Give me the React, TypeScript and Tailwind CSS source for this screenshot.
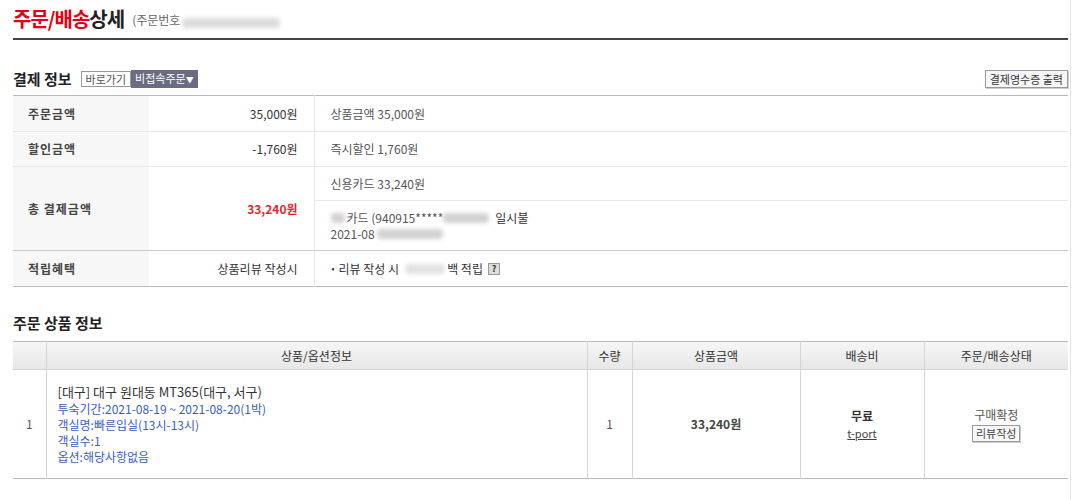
import React from 'react'

const font = { fontFamily: '"Noto Sans CJK KR", "Noto Sans", sans-serif' }

function Blur({ w, className = '' }: { w: number; className?: string }) {
  return (
    <span
      className={`inline-block align-middle h-[10px] rounded-sm bg-[#d2d2d2] blur-[2px] ${className}`}
      style={{ width: w }}
    />
  )
}

function PayRow({
  label,
  value,
  children,
  valueClass = 'text-[#333]',
  top = 'border-t border-[#e8e8e8]',
}: {
  label: string
  value: string
  children: React.ReactNode
  valueClass?: string
  top?: string
}) {
  return (
    <tr className={top}>
      <th className="w-[136px] bg-[#f7f7f7] pl-[15px] text-left text-[12px] font-bold text-[#444] tracking-[1px]">
        {label}
      </th>
      <td className={`w-[165px] border-r border-[#e8e8e8] pr-[16px] text-right text-[12px] ${valueClass}`}>
        {value}
      </td>
      <td className="p-0 text-[12px] text-[#555]">{children}</td>
    </tr>
  )
}

export default function App() {
  return (
    <div style={font} className="w-[1071px] min-h-[500px] border-r border-[#e3e3e3] bg-white pl-[13px] pr-[2px]">
      {/* page title */}
      <div className="flex items-end h-[40px] border-b-2 border-[#444] pb-[7px]">
        <h1 className="text-[20px] font-bold leading-[24px] tracking-[-1px]">
          <span className="text-[#e60012]">주문/배송</span>
          <span className="text-[#222]">상세</span>
        </h1>
        <span className="ml-[8px] mb-[2px] text-[12px] text-[#666]">(주문번호</span>
        <Blur w={98} className="ml-[2px] mb-[3px] bg-[#dcdcdc]" />
      </div>

      {/* payment info */}
      <div className="mt-[29px] flex items-center justify-between h-[20px]">
        <div className="flex items-center">
          <h2 className="text-[15px] font-bold text-[#222] leading-[20px]">결제 정보</h2>
          <span className="ml-[9px] border border-[#999] bg-white px-[4px] text-[11px] leading-[14px] text-[#555]">
            바로가기
          </span>
          <span className="bg-[#6a6c84] px-[4px] text-[11px] leading-[16px] text-white">
            비접속주문<span className="text-[8px] align-middle">▼</span>
          </span>
        </div>
        <span className="border border-[#999] bg-[#f6f6f6] px-[4px] text-[11px] leading-[16px] text-[#333] shadow-[1px_1px_0_#ccc]">
          결제영수증 출력
        </span>
      </div>

      <table className="mt-[6px] w-full border-collapse border-t border-b border-[#b9b9b9]">
        <tbody>
          <PayRow label="주문금액" value="35,000원" top="">
            <div className="h-[35px] flex items-center pl-[16px]">상품금액 35,000원</div>
          </PayRow>
          <PayRow label="할인금액" value="-1,760원">
            <div className="h-[34px] flex items-center pl-[16px]">즉시할인 1,760원</div>
          </PayRow>
          <PayRow label="총 결제금액" value="33,240원" valueClass="font-bold text-[#e4262c]">
            <div className="h-[34px] flex items-center pl-[16px] border-b border-[#e8e8e8]">신용카드 33,240원</div>
            <div className="h-[49px] flex flex-col justify-center pl-[16px] leading-[16px]">
              <div className="flex items-center">
                <Blur w={14} />
                <span className="ml-[2px]">카드 (940915*****</span>
                <Blur w={46} />
                <span className="ml-[6px] text-[#333]">일시불</span>
              </div>
              <div className="flex items-center">
                <span>2021-08</span>
                <Blur w={66} className="ml-[2px]" />
              </div>
            </div>
          </PayRow>
          <PayRow label="적립혜택" value="상품리뷰 작성시" top="border-t border-[#c9c9c9]">
            <div className="h-[35px] flex items-center pl-[17px] text-[#333]">
              <span className="text-[9px] mr-[4px]">•</span>
              <span>리뷰 작성 시</span>
              <Blur w={40} className="ml-[6px] bg-[#e2e2e2]" />
              <span className="ml-[2px]">백 적립</span>
              <span className="ml-[5px] inline-flex h-[12px] w-[12px] items-center justify-center border border-[#999] bg-[#ddd] text-[9px] font-bold leading-none text-[#333]">
                ?
              </span>
            </div>
          </PayRow>
        </tbody>
      </table>

      {/* order items */}
      <h2 className="mt-[26px] text-[15px] font-bold text-[#222] leading-[20px]">주문 상품 정보</h2>

      <table className="mt-[8px] w-full border-collapse border-t border-b border-[#b9b9b9] text-[12px] text-[#333]">
        <thead>
          <tr className="h-[28px] bg-gradient-to-b from-[#f6f6f6] to-[#e7e7e7] border-b border-[#d4d4d4]">
            <th className="w-[33px] border-r border-[#d4d4d4] font-normal"></th>
            <th className="w-[541px] border-r border-[#d4d4d4] font-normal">상품/옵션정보</th>
            <th className="w-[45px] border-r border-[#d4d4d4] font-normal">수량</th>
            <th className="w-[168px] border-r border-[#d4d4d4] font-normal">상품금액</th>
            <th className="w-[124px] border-r border-[#d4d4d4] font-normal">배송비</th>
            <th className="font-normal">주문/배송상태</th>
          </tr>
        </thead>
        <tbody>
          <tr className="h-[109px]">
            <td className="border-r border-[#d4d4d4] text-center text-[#555]">1</td>
            <td className="border-r border-[#d4d4d4] pl-[11px] align-middle">
              <div className="text-[13px] leading-[18px] text-[#333]">[대구] 대구 원대동 MT365(대구, 서구)</div>
              <div className="leading-[16px] text-[#3b5ccc]">
                <div>투숙기간:2021-08-19 ~ 2021-08-20(1박)</div>
                <div>객실명:빠른입실(13시-13시)</div>
                <div>객실수:1</div>
                <div>옵션:해당사항없음</div>
              </div>
            </td>
            <td className="border-r border-[#d4d4d4] text-center text-[#555]">1</td>
            <td className="border-r border-[#d4d4d4] text-center font-bold text-[#444]">33,240원</td>
            <td className="border-r border-[#d4d4d4] text-center">
              <div className="font-bold text-[#333] leading-[18px]">무료</div>
              <div className="text-[11px] underline text-[#444] leading-[16px]">t-port</div>
            </td>
            <td className="text-center">
              <div className="text-[#555] leading-[18px]">구매확정</div>
              <span className="inline-block border border-[#999] bg-[#f8f8f8] px-[3px] text-[11px] leading-[15px] text-[#444] shadow-[1px_1px_0_#ccc]">
                리뷰작성
              </span>
            </td>
          </tr>
        </tbody>
      </table>
    </div>
  )
}
